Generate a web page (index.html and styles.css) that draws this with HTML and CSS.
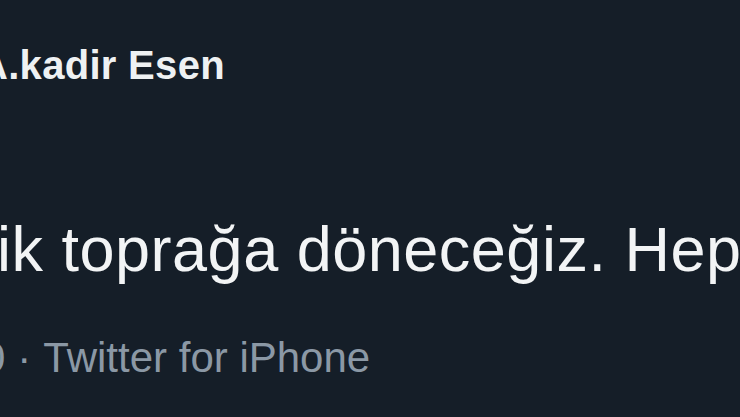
FILE: index.html
```html
<!DOCTYPE html>
<html lang="tr">
<head>
    <meta charset="UTF-8">
    <meta name="viewport" content="width=device-width, initial-scale=1.0">
    <title>Tweet</title>
    <link rel="stylesheet" href="styles.css">
</head>
<body>
    <div class="tweet">
        <div class="tweet-header">
            <span class="display-name">A.kadir Esen</span>
        </div>

        <div class="tweet-body">
            <p class="tweet-text">ik toprağa döneceğiz. Hepimiz</p>
        </div>

        <div class="tweet-meta">
            <span class="meta-time">0</span>
            <span class="meta-dot">·</span>
            <span class="meta-source">Twitter for iPhone</span>
        </div>
    </div>
</body>
</html>
```

FILE: styles.css
```css
* {
    margin: 0;
    padding: 0;
    box-sizing: border-box;
}

html, body {
    height: 100%;
}

body {
    font-family: 'Liberation Sans', Arial, sans-serif;
    background: #151e28;
    overflow: hidden;
}

.tweet {
    display: flex;
    flex-direction: column;
    white-space: nowrap;
}

.tweet-header {
    padding-top: 42px;
    height: 90px;
}

.display-name {
    display: block;
    margin-left: -21px;
    font-size: 40px;
    font-weight: bold;
    line-height: 46px;
    color: #eef1f3;
    letter-spacing: 0.3px;
}

.tweet-body {
    padding-top: 124px;
}

.tweet-text {
    margin-left: -3px;
    font-size: 63px;
    line-height: 70px;
    color: #f2f4f5;
    letter-spacing: 0.5px;
}

.tweet-meta {
    display: flex;
    gap: 12px;
    padding-top: 50px;
    margin-left: -18px;
    font-size: 42px;
    line-height: 48px;
    color: #8b98a5;
}
```
